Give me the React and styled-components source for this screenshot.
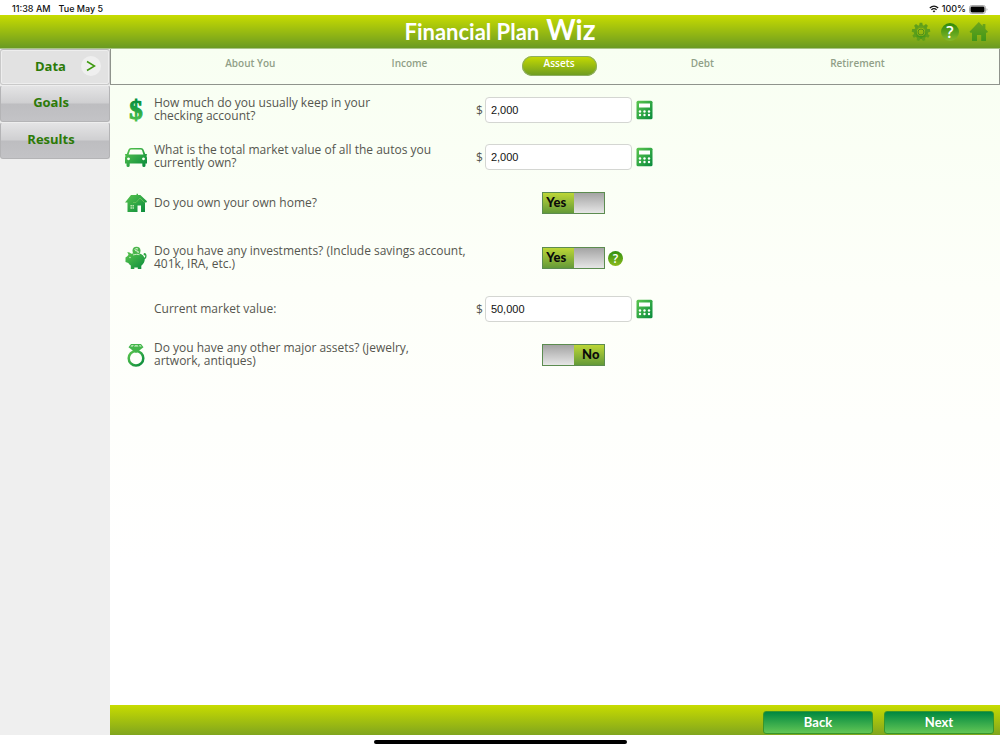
import React, { useState } from "react"
import styled, { createGlobalStyle } from "styled-components"

const GlobalStyle = createGlobalStyle`
  * {
    box-sizing: border-box;
  }
  body {
    margin: 0;
    background: #fff;
    font-family: "Open Sans", "Noto Sans", sans-serif;
  }
`

const green = "linear-gradient(#c8dc00, #6a9a22)"
const rounded = `"Lato", sans-serif`

const Page = styled.div`
  display: flex;
  flex-direction: column;
  min-height: 100vh;
`

const StatusBar = styled.div`
  display: flex;
  justify-content: space-between;
  align-items: center;
  height: 15px;
  padding: 3px 12px 0;
  font: 500 9px/12px "Inter", sans-serif;
  color: #111;
`

const StatusGroup = styled.div`
  display: flex;
  align-items: center;
  gap: ${props => props.$gap}px;
`

const Header = styled.header`
  display: grid;
  grid-template-columns: 1fr auto 1fr;
  align-items: center;
  height: 34px;
  padding: 0 11px;
  background: ${green};
  border-bottom: 1px solid #a9c488;
`

const Title = styled.h1`
  grid-column: 2;
  display: flex;
  align-items: baseline;
  gap: 7px;
  margin: 0;
  padding-bottom: 2px;
  font: 700 22px/28px ${rounded};
  color: #fff;
`

const Wiz = styled.span`
  font-size: 28px;
`

const Tools = styled.div`
  display: flex;
  justify-content: flex-end;
  align-items: center;
  gap: 10px;
`

const IconButton = styled.button`
  display: flex;
  padding: 0;
  border: 0;
  background: none;
  cursor: pointer;
`

const Help = styled.button`
  width: ${props => props.$size}px;
  height: ${props => props.$size}px;
  padding: 0;
  border: 0;
  border-radius: 50%;
  background: ${props =>
    props.$dark
      ? "linear-gradient(#2f8a08, #86b82c)"
      : "linear-gradient(#2f8f10, #8cba1c)"};
  color: #fff;
  font: ${props => (props.$dark ? "600 16px" : "600 12px")} / ${props =>
      props.$size}px "Open Sans", sans-serif;
  text-align: center;
`

const Body = styled.div`
  display: flex;
  flex: 1;
`

const Sidebar = styled.nav`
  flex: 0 0 110px;
  background: #efefef;
`

const SideLink = styled.a`
  display: flex;
  align-items: center;
  justify-content: center;
  gap: 15px;
  height: ${props => (props.$active ? 36 : 37)}px;
  padding: ${props => (props.$active ? "0 2px 2px 28px" : "0 8px 4px 0")};
  border: 1px solid ${props => (props.$active ? "#c9c9c9" : "#b4b4b6")};
  border-top-color: ${props => (props.$active ? "#bbb" : "#eee")};
  border-radius: 3px;
  background: ${props =>
    props.$active
      ? "#e2e2e2"
      : "linear-gradient(#e4e4e5, #cfcfd1 49%, #bdbdc0 51%, #c3c3c6)"};
  box-shadow: ${props => (props.$active ? "inset 0 0 0 1px #eee" : "none")};
  color: #2c7a08;
  font-size: 13px;
  font-weight: 700;
  text-decoration: none;
`

const Chevron = styled.span`
  display: flex;
  padding: 4px;
  border-radius: 50%;
  background: #efefef;
`

const Main = styled.main`
  display: flex;
  flex: 1;
  flex-direction: column;
  min-width: 0;
  background: linear-gradient(#f8fff2, #fdfff9 35%, #fff 75%);
`

const Tabs = styled.nav`
  display: flex;
  justify-content: space-evenly;
  height: 36px;
  padding: 7px 20px 0;
  border: 1px solid #8f948c;
  border-top: 0;
`

const Tab = styled.a`
  height: 20px;
  padding: 0 22px;
  border-radius: 10px;
  background: ${props => (props.$active ? green : "none")};
  box-shadow: ${props => (props.$active ? "inset 0 0 0 1px #8eae62" : "none")};
  color: ${props => (props.$active ? "#fff" : "#919f88")};
  font-size: 10px;
  font-weight: 600;
  line-height: 14px;
  text-decoration: none;
`

const Form = styled.form`
  flex: 1;
  padding: 2px 9px;
`

const Row = styled.div`
  display: grid;
  grid-template-columns: 34px minmax(200px, 320px) 180px;
  align-items: center;
  height: ${props => props.$height || 46}px;
`

const RowIcon = styled.div`
  display: flex;
  justify-content: center;
`

const Question = styled.label`
  padding-left: 1px;
  padding-bottom: 2px;
  color: #55564f;
  font-size: 12px;
  line-height: 13px;
  white-space: pre-line;
`

const Control = styled.div`
  display: flex;
  align-items: center;
  gap: ${props => (props.$toggle ? 3 : 2)}px;
  padding-left: ${props => (props.$toggle ? 69 : 3)}px;
  color: #55564f;
  font-size: 12px;
`

const MoneyInput = styled.input`
  width: 147px;
  height: 26px;
  margin-right: 2px;
  padding: 0 5px;
  border: 1px solid #d4d6d2;
  border-radius: 4px;
  background: #fff;
  color: #111;
  font: 11px "Liberation Sans", sans-serif;
`

const Switch = styled.span`
  position: relative;
  display: grid;
  grid-template-columns: 1fr 1fr;
  width: 63px;
  height: 22px;
  border: 1px solid #5c8c50;
  input {
    position: absolute;
    inset: 0;
    width: 100%;
    height: 100%;
    margin: 0;
    opacity: 0;
    cursor: pointer;
  }
`

const Half = styled.span`
  background: ${props =>
    props.$on
      ? "linear-gradient(#bcd636, #649a38)"
      : "linear-gradient(#a4a4a4, #e6e6e6)"};
  color: #0a0a0a;
  font: 900 13px/19px ${rounded};
  text-align: center;
  padding-left: ${props => (props.$shift ? 4 : 0)}px;
  padding-right: ${props => (props.$shift ? 0 : 4)}px;
`

const Footer = styled.footer`
  display: flex;
  justify-content: flex-end;
  gap: 11px;
  height: 30px;
  padding: 6px 6px 1px;
  background: linear-gradient(#c8dc00, #80a51e);
`

const FooterButton = styled.button`
  width: 110px;
  padding: 0 0 2px;
  border: 1px solid #38962c;
  border-radius: 3px;
  background: linear-gradient(#008840, #62c655);
  color: #fff;
  font: 700 13px/18px ${rounded};
`

const HomeBar = styled.div`
  display: flex;
  justify-content: center;
  height: 15px;
  padding-top: 5px;
  &::after {
    content: "";
    width: 253px;
    height: 4px;
    border-radius: 2px;
    background: #000;
  }
`

const Gradients = () => (
  <svg width="0" height="0" style={{ display: "block" }} aria-hidden="true">
    <defs>
      <linearGradient id="leafDown" x1="0" y1="0" x2="0" y2="1">
        <stop offset="0.2" stopColor="#078f3d" />
        <stop offset="1" stopColor="#5ac94e" />
      </linearGradient>
      <linearGradient id="leaf" x1="0" y1="0" x2="1" y2="1">
        <stop offset="0" stopColor="#5cc64e" />
        <stop offset="1" stopColor="#078a3c" />
      </linearGradient>
      <linearGradient id="tool" x1="0" y1="0" x2="0" y2="1">
        <stop offset="0" stopColor="#6fa61a" />
        <stop offset="1" stopColor="#3f961a" />
      </linearGradient>
    </defs>
  </svg>
)

const DollarIcon = () => (
  <svg width="20" height="34" viewBox="0 0 20 34">
    <text
      x="10"
      y="26"
      textAnchor="middle"
      fontFamily="Liberation Serif, serif"
      fontWeight="700"
      fontSize="27"
      fill="url(#leafDown)"
      stroke="url(#leafDown)"
      strokeWidth="1"
    >
      $
    </text>
  </svg>
)

const CarIcon = () => (
  <svg width="24" height="22" viewBox="0 0 24 22">
    <path
      fill="url(#leaf)"
      fillRule="evenodd"
      d="M7 2h10q2 0 2.600 1.700L21.200 8h1q.9 0 .9.800t-.9.900q.8.8.8 2v5.800H21.500v2q0 1.500-1.600 1.500t-1.600-1.500v-2H5.700v2Q5.700 21 4.100 21t-1.600-1.500v-2H1v-5.800q0-1.200.8-2-.9-.1-.9-.9T1.800 8h1l1.600-4.300Q5 2 7 2zM7.200 3.600q-1 0-1.300.8L4.600 8.400h14.800l-1.300-4q-.3-.8-1.300-.8zM4.500 11.400a1.400 1.400 0 1 0 .01 0zm15 0a1.400 1.400 0 1 0 .01 0z"
    />
  </svg>
)

const HouseIcon = () => (
  <svg width="22" height="20" viewBox="0 0 22 20">
    <path
      fill="url(#leaf)"
      d="M6 2h5.500V.8H13V2h2.300l6.700 6.300-.6 1.200H20V19H2.500V9.500H0z"
    />
    <path d="M8 9.500h3l4-4.500 4.500 4.500" stroke="#6cc35c" strokeWidth="0.800" fill="none" />
    <path d="M12.500 12.500h3.500V19h-3.500z" fill="#fbfff8" />
    <path d="M5.500 12h1.400v1.600H5.500zm2 0h1.400v1.600H7.500zm-2 2.200h1.400v1.600H5.500zm2 0h1.400v1.600H7.500z" fill="#c8ecbc" />
  </svg>
)

const PigIcon = () => (
  <svg width="22" height="24" viewBox="0 0 22 24">
    <circle cx="11.500" cy="4.800" r="4" fill="#4bb54c" />
    <path d="M13 3q-3-1-3 .5t2 1.500 1 2.200-3 0" fill="none" stroke="#e6f8dd" />
    <path
      fill="url(#leaf)"
      d="M2.300 6q2.500 0 4 1.800 5-1.600 9.700.2 2.700 1.300 3.400 3.800 1-.4.800-2.300-1.600 0-1.700-1.300.2-1.400 1.500-1.200 1.600.6 1.500 2.900.1 2.600-1.700 3.100-.1 4-3.500 6.700V23h-3.500v-1.500H9.300V23H5.800v-3.500q-1.500-1-2.500-2.500L.5 16v-4.600l1.800-1.100 1.200-1.500z"
    />
    <circle cx="5" cy="11.500" r="0.700" fill="#dff5d7" />
    <path d="M8 8.900q3.500-1 6.500-.2" fill="none" stroke="#e6f8dd" strokeWidth="0.800" />
  </svg>
)

const RingIcon = () => (
  <svg width="20" height="24" viewBox="0 0 20 24">
    <circle cx="10" cy="15.200" r="7.300" fill="none" stroke="url(#leaf)" strokeWidth="2.500" />
    <path d="M5 1h10l2.500 3.200L10 10 2.500 4.200z" fill="#43b64a" />
    <path d="M5.500 2.200h2.300l-1 1.300H4.500zM9 2.200h2.500l1 1.300H8zM13 2.200h1.500l1.200 1.300h-2z" fill="#d9f4d4" />
  </svg>
)

const CalculatorIcon = () => (
  <svg width="17" height="20" viewBox="0 0 17 20">
    <rect x="0.500" y="0.800" width="16" height="18.500" rx="1.500" fill="url(#leaf)" />
    <rect x="3" y="3.500" width="11" height="4" fill="#fff" />
    {[11.500, 15].map(y =>
      [4, 8.500, 13].map(x => (
        <circle key={`${x}-${y}`} cx={x} cy={y} r="1.200" fill="#fff" />
      ))
    )}
  </svg>
)

const GearIcon = () => (
  <svg width="20" height="20" viewBox="0 0 20 20">
    <circle cx="10" cy="10" r="5.600" fill="none" stroke="url(#tool)" strokeWidth="3" />
    <circle cx="10" cy="10" r="3" fill="none" stroke="#4f8f18" />
    {[0, 40, 80, 120, 160, 200, 240, 280, 320].map(angle => (
      <path
        key={angle}
        d="M8 4.500L8.700.8h2.600l.7 3.700z"
        fill="#5f9f1a"
        transform={`rotate(${angle} 10 10)`}
      />
    ))}
  </svg>
)

const HomeIcon = () => (
  <svg width="20" height="22" viewBox="0 0 20 22">
    <path
      fill="url(#tool)"
      d="M9.800 1l3.900 4V3h2.700v5L19 10.700l-1 1h-1V20h-4.800v-6H8v6H3v-8.300H1.500l-1-1z"
    />
  </svg>
)

const WifiIcon = () => (
  <svg width="10" height="8" viewBox="0 0 10 8">
    <path d="M.8 3q4.200-3.600 8.400 0M2.400 4.800q2.600-2.200 5.200 0" fill="none" stroke="#111" strokeWidth="1.300" />
    <path d="M3.600 6.100q1.400-1 2.800 0L5 7.600z" fill="#111" />
  </svg>
)

const BatteryIcon = () => (
  <svg width="19" height="9" viewBox="0 0 19 9">
    <rect x="0.500" y="0.500" width="16" height="8" rx="2.200" fill="none" stroke="#aaa" />
    <rect x="1.500" y="1.500" width="14" height="6" rx="1.400" fill="#000" />
    <path d="M17.500 3.200q1 .3 1 1.300t-1 1.300z" fill="#aaa" />
  </svg>
)

const fields = [
  {
    id: "checking",
    icon: DollarIcon,
    text: "How much do you usually keep in your\nchecking account?",
    value: "2,000",
  },
  {
    id: "autos",
    icon: CarIcon,
    text: "What is the total market value of all the autos you\ncurrently own?",
    value: "2,000",
    height: 48,
  },
  {
    id: "home",
    icon: HouseIcon,
    text: "Do you own your own home?",
    on: true,
    height: 44,
  },
  {
    id: "investments",
    icon: PigIcon,
    text: "Do you have any investments? (Include savings account,\n401k, IRA, etc.)",
    on: true,
    help: true,
    height: 66,
  },
  { id: "market", text: "Current market value:", value: "50,000", height: 36 },
  {
    id: "other",
    icon: RingIcon,
    text: "Do you have any other major assets? (jewelry,\nartwork, antiques)",
    on: false,
    height: 56,
  },
]

function Toggle({ id, initial }) {
  const [on, setOn] = useState(initial)
  return (
    <Switch>
      <Half $on={on}>{on && "Yes"}</Half>
      <Half $on={!on} $shift>
        {!on && "No"}
      </Half>
      <input
        id={id}
        type="checkbox"
        checked={on}
        onChange={e => setOn(e.target.checked)}
      />
    </Switch>
  )
}

function Field({ id, icon: Icon, text, value, on, help, height }) {
  const isMoney = value !== undefined
  return (
    <Row $height={height}>
      <RowIcon>{Icon && <Icon />}</RowIcon>
      <Question htmlFor={id}>{text}</Question>
      <Control $toggle={!isMoney}>
        {isMoney ? (
          <>
            $
            <MoneyInput id={id} type="text" defaultValue={value} />
            <IconButton type="button" aria-label="Calculator">
              <CalculatorIcon />
            </IconButton>
          </>
        ) : (
          <Toggle id={id} initial={on} />
        )}
        {help && (
          <Help type="button" $size={15} aria-label="Help">
            ?
          </Help>
        )}
      </Control>
    </Row>
  )
}

const tabs = ["About You", "Income", "Assets", "Debt", "Retirement"]

export default function App() {
  return (
    <Page>
      <GlobalStyle />
      <Gradients />
      <StatusBar>
        <StatusGroup $gap={8}>
          <span>11:38 AM</span>
          <span>Tue May 5</span>
        </StatusGroup>
        <StatusGroup $gap={3}>
          <WifiIcon />
          <span>100%</span>
          <BatteryIcon />
        </StatusGroup>
      </StatusBar>
      <Header>
        <Title>
          Financial Plan <Wiz>Wiz</Wiz>
        </Title>
        <Tools>
          <IconButton aria-label="Settings">
            <GearIcon />
          </IconButton>
          <Help $dark $size={18} aria-label="Help">
            ?
          </Help>
          <IconButton aria-label="Home">
            <HomeIcon />
          </IconButton>
        </Tools>
      </Header>
      <Body>
        <Sidebar>
          <SideLink href="#data" $active>
            Data
            <Chevron>
              <svg width="12" height="12" viewBox="0 0 12 12">
                <path d="M2 1.500l7.500 4.500L2 10.500" fill="none" stroke="#3f9a10" strokeWidth="1.500" />
              </svg>
            </Chevron>
          </SideLink>
          <SideLink href="#goals">Goals</SideLink>
          <SideLink href="#results">Results</SideLink>
        </Sidebar>
        <Main>
          <Tabs>
            {tabs.map(tab => (
              <Tab key={tab} href="#" $active={tab === "Assets"}>
                {tab}
              </Tab>
            ))}
          </Tabs>
          <Form>
            {fields.map(field => (
              <Field key={field.id} {...field} />
            ))}
          </Form>
          <Footer>
            <FooterButton>Back</FooterButton>
            <FooterButton>Next</FooterButton>
          </Footer>
        </Main>
      </Body>
      <HomeBar />
    </Page>
  )
}
